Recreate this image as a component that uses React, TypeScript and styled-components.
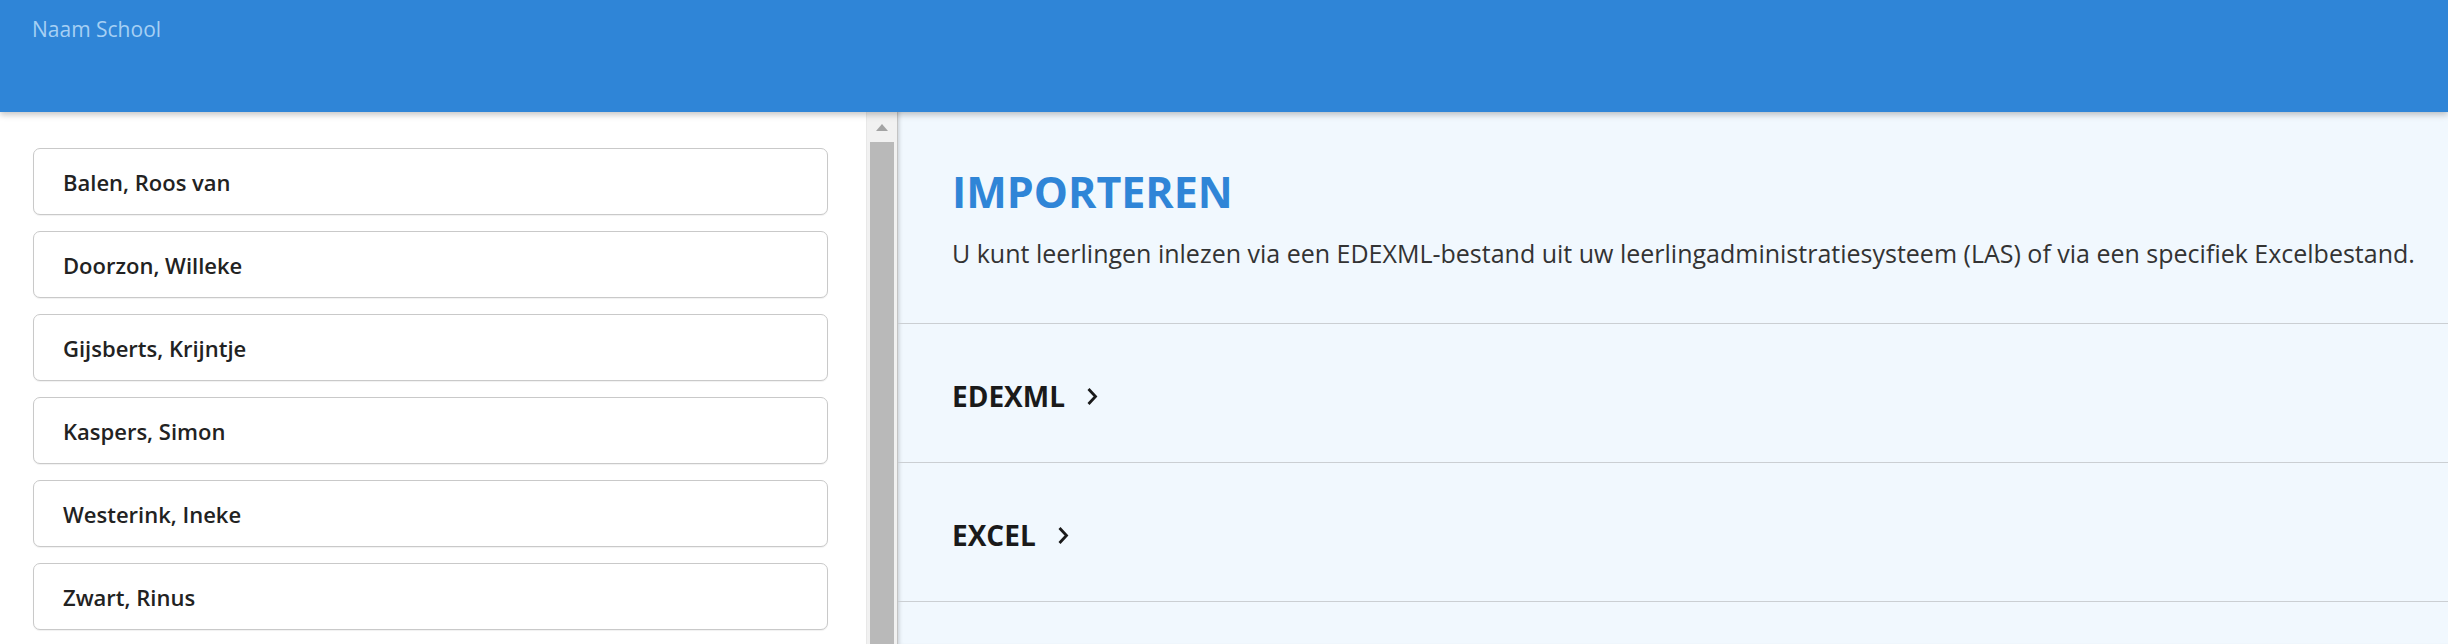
import { FC } from "react";
import styled, { createGlobalStyle } from "styled-components";

const GlobalStyle = createGlobalStyle`
  html, body {
    margin: 0;
    padding: 0;
    height: 100%;
    overflow: hidden;
  }
  body {
    font-family: "Open Sans", "Noto Sans", sans-serif;
    background: #ffffff;
  }
`;

const Page = styled.div`
  display: flex;
  flex-direction: column;
  height: 644px;
`;

const TopBar = styled.header`
  position: relative;
  z-index: 2;
  height: 112px;
  box-sizing: border-box;
  padding: 15px 32px 0;
  background: #2f85d7;
  box-shadow: 0 3px 6px rgba(0, 0, 0, 0.22);
`;

const SchoolName = styled.span`
  font-size: 21px;
  color: #a6d0f4;
`;

const Body = styled.div`
  display: flex;
  flex: 1;
  min-height: 0;
`;

const Sidebar = styled.aside`
  display: flex;
  width: 897px;
  flex-shrink: 0;
  background: #ffffff;
  overflow: hidden;
`;

const StudentList = styled.ul`
  list-style: none;
  margin: 0;
  padding: 36px 38px 0 33px;
  flex: 1;
  display: flex;
  flex-direction: column;
  gap: 16px;
`;

const StudentCard = styled.li`
  height: 67px;
  flex-shrink: 0;
  box-sizing: border-box;
  display: flex;
  align-items: center;
  padding-left: 29px;
  border: 1px solid #c9c9c9;
  border-radius: 7px;
  background: #ffffff;
  box-shadow: 0 1px 1px rgba(0, 0, 0, 0.06);
  font-size: 22px;
  font-weight: 600;
  color: #222222;
`;

const ScrollTrack = styled.div`
  width: 30px;
  flex-shrink: 0;
  display: flex;
  flex-direction: column;
  align-items: center;
  background: #f1f1f1;
  border-left: 1px solid #e8e8e8;
`;

const ScrollArrow = styled.div`
  margin-top: 12px;
  width: 0;
  height: 0;
  border-left: 6px solid transparent;
  border-right: 6px solid transparent;
  border-bottom: 7px solid #a3a3a3;
`;

const ScrollThumb = styled.div`
  margin-top: 11px;
  width: 24px;
  flex: 1;
  background: #b9b9b9;
`;

const Content = styled.main`
  flex: 1;
  min-width: 0;
  background: #f1f8fe;
  border-left: 1px solid #c4c4c4;
  box-shadow: inset 4px 0 4px -3px rgba(0, 0, 0, 0.18);
`;

const Intro = styled.section`
  padding: 50px 16px 53px 54px;
  border-bottom: 1px solid #cbcfd3;
`;

const Title = styled.h1`
  margin: 0;
  font-size: 43px;
  font-weight: 700;
  color: #2f85d7;
`;

const Lead = styled.p`
  margin: 15px 0 0;
  font-size: 25px;
  white-space: nowrap;
  color: #333333;
`;

const OptionRow = styled.div`
  height: 139px;
  box-sizing: border-box;
  padding: 6px 54px 0;
  display: flex;
  align-items: center;
  gap: 21px;
  border-bottom: 1px solid #cbcfd3;
  font-size: 28px;
  font-weight: 700;
  color: #1a1a1a;
`;

const Chevron: FC = () => (
  <svg width="12" height="19" viewBox="0 0 12 19" fill="none">
    <path d="M2.5 2 L9.5 9.5 L2.5 17" stroke="#1a1a1a" strokeWidth="2.8" />
  </svg>
);

const students = [
  "Balen, Roos van",
  "Doorzon, Willeke",
  "Gijsberts, Krijntje",
  "Kaspers, Simon",
  "Westerink, Ineke",
  "Zwart, Rinus",
];

const options = ["EDEXML", "EXCEL"];

const App: FC = () => (
  <>
    <GlobalStyle />
    <Page>
      <TopBar>
        <SchoolName>Naam School</SchoolName>
      </TopBar>
      <Body>
        <Sidebar>
          <StudentList>
            {students.map((name) => (
              <StudentCard key={name}>{name}</StudentCard>
            ))}
          </StudentList>
          <ScrollTrack>
            <ScrollArrow />
            <ScrollThumb />
          </ScrollTrack>
        </Sidebar>
        <Content>
          <Intro>
            <Title>IMPORTEREN</Title>
            <Lead>
              U kunt leerlingen inlezen via een EDEXML-bestand uit uw
              leerlingadministratiesysteem (LAS) of via een specifiek
              Excelbestand.
            </Lead>
          </Intro>
          {options.map((label) => (
            <OptionRow key={label}>
              {label}
              <Chevron />
            </OptionRow>
          ))}
        </Content>
      </Body>
    </Page>
  </>
);

export default App;
